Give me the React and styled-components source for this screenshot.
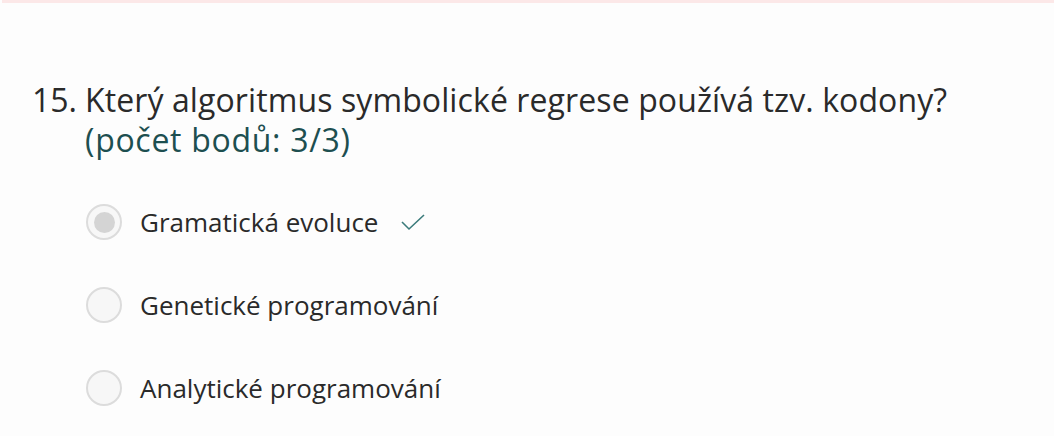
import styled, { createGlobalStyle } from "styled-components";

const GlobalStyle = createGlobalStyle`
  html, body {
    margin: 0;
    padding: 0;
    background: #fdfdfd;
  }
  body {
    font-family: "Open Sans", "Noto Sans", sans-serif;
  }
`;

const Page = styled.div`
  width: 1054px;
  height: 436px;
  overflow: hidden;
  background: #fdfdfd;
`;

const TopBar = styled.div`
  height: 3px;
  margin-left: 2px;
  background: #fce8e8;
`;

const Question = styled.div`
  display: flex;
  padding: 77px 0 0 32px;
  color: #2a2a2a;
  font-size: 32px;
  line-height: 40px;
`;

const Number = styled.span`
  width: 53px;
  flex-shrink: 0;
`;

const Title = styled.div`
  letter-spacing: 0.1px;
`;

const Points = styled.div`
  color: #1d4f50;
  letter-spacing: 0.7px;
`;

const Options = styled.div`
  display: flex;
  flex-direction: column;
  gap: 47px;
  padding: 44px 0 0 86px;
`;

const Option = styled.label`
  display: flex;
  align-items: center;
  height: 36px;
  font-size: 26px;
  color: #2a2a2a;
`;

const Radio = styled.span`
  box-sizing: border-box;
  width: 36px;
  height: 36px;
  border-radius: 50%;
  border: 2px solid #dcdcdc;
  background: #f7f7f7;
  display: flex;
  align-items: center;
  justify-content: center;
  margin-right: 18px;
  flex-shrink: 0;

  &::after {
    content: "";
    display: ${(p) => (p.$checked ? "block" : "none")};
    width: 21px;
    height: 21px;
    border-radius: 50%;
    background: #d4d4d4;
  }
`;

const Check = styled.svg`
  margin-left: 22px;
`;

const options = [
  { text: "Gramatická evoluce", checked: true, correct: true },
  { text: "Genetické programování" },
  { text: "Analytické programování" },
];

export default function App() {
  return (
    <Page>
      <GlobalStyle />
      <TopBar />
      <Question>
        <Number>15.</Number>
        <div>
          <Title>Který algoritmus symbolické regrese používá tzv. kodony?</Title>
          <Points>(počet bodů: 3/3)</Points>
        </div>
      </Question>
      <Options>
        {options.map((o) => (
          <Option key={o.text}>
            <Radio $checked={o.checked} />
            {o.text}
            {o.correct && (
              <Check width="26" height="18" viewBox="0 0 26 18">
                <path d="M2 9 L9 16 L24 2" fill="none" stroke="#3b7b7b" strokeWidth="1.6" />
              </Check>
            )}
          </Option>
        ))}
      </Options>
    </Page>
  );
}
